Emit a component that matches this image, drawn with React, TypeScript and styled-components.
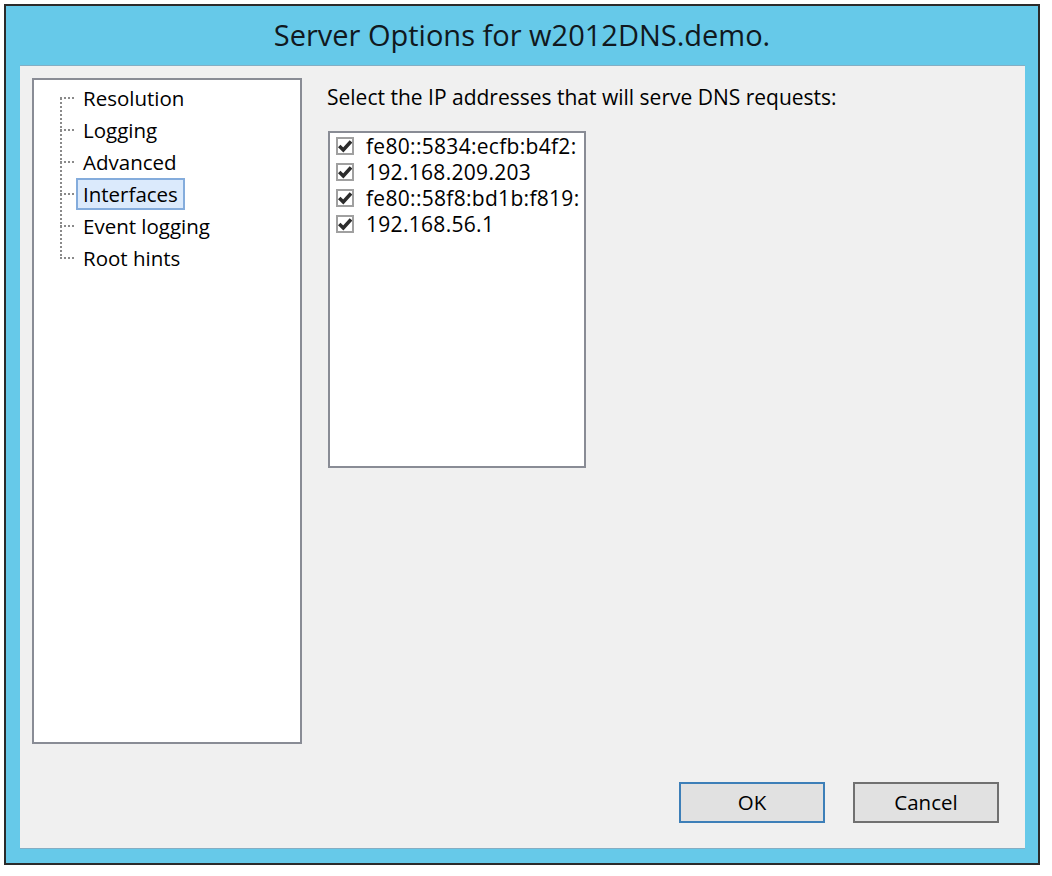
import React from 'react';
import styled, { createGlobalStyle } from 'styled-components';

const TREE_ITEMS = ['Resolution', 'Logging', 'Advanced', 'Interfaces', 'Event logging', 'Root hints'];
const SELECTED = 'Interfaces';

const ADDRESSES = ['fe80::5834:ecfb:b4f2:', '192.168.209.203', 'fe80::58f8:bd1b:f819:', '192.168.56.1'];

const FONT = `"Open Sans", "Noto Sans", sans-serif`;

const GlobalStyle = createGlobalStyle`
  html, body {
    margin: 0;
    padding: 0;
    background: #ffffff;
  }
  * {
    box-sizing: border-box;
  }
`;

export default function App() {
  return (
    <>
      <GlobalStyle />
      <Page>
        <Window>
          <TitleBar>Server Options for w2012DNS.demo.</TitleBar>
          <Client>
            <Body>
              <TreeBox>
                {TREE_ITEMS.map((item, idx) => (
                  <TreeRow key={item}>
                    <Connector $first={idx === 0} $last={idx === TREE_ITEMS.length - 1} />
                    <TreeLabel $selected={item === SELECTED}>{item}</TreeLabel>
                  </TreeRow>
                ))}
              </TreeBox>
              <Pane>
                <Caption>Select the IP addresses that will serve DNS requests:</Caption>
                <ListBox>
                  {ADDRESSES.map((addr) => (
                    <ListRow key={addr}>
                      <CheckBox>
                        <svg width="14" height="14" viewBox="0 0 14 14">
                          <path d="M1.2 7 L5.3 11 L13 2.4" fill="none" stroke="#2c2c2c" strokeWidth="3.6" />
                        </svg>
                      </CheckBox>
                      <Address>{addr}</Address>
                    </ListRow>
                  ))}
                </ListBox>
              </Pane>
            </Body>
            <Buttons>
              <Button $default>OK</Button>
              <Button>Cancel</Button>
            </Buttons>
          </Client>
        </Window>
      </Page>
    </>
  );
}

const Page = styled.div`
  padding: 4px 0 0 4px;
  width: 1052px;
  height: 876px;
`;

const Window = styled.div`
  width: 1036px;
  height: 861px;
  border: 2px solid #2b2b2b;
  background: #66c9e9;
  display: flex;
  flex-direction: column;
`;

const TitleBar = styled.div`
  height: 59px;
  display: flex;
  align-items: center;
  justify-content: center;
  padding-bottom: 3px;
  font-family: ${FONT};
  font-size: 29px;
  color: #101820;
`;

const Client = styled.div`
  margin: 0 13px 14px 14px;
  flex: 1;
  background: #f0f0f0;
  border-top: 1px solid #84aec4;
  border-bottom: 1px solid #84aec4;
  padding: 12px 26px 25px 12px;
  display: flex;
  flex-direction: column;
  font-family: ${FONT};
  font-size: 21px;
  color: #000;
`;

const Body = styled.div`
  flex: 1;
  display: flex;
  gap: 25px;
`;

const TreeBox = styled.div`
  width: 270px;
  height: 666px;
  background: #fff;
  border: 2px solid #898c95;
  padding: 2px 0 0 26px;
  font-size: 20.5px;
`;

const TreeRow = styled.div`
  height: 32px;
  display: flex;
  align-items: stretch;
`;

const dots = (dir: 'x' | 'y') =>
  dir === 'x'
    ? 'repeating-linear-gradient(90deg, #8a8a8a 0 2px, transparent 2px 4px)'
    : 'repeating-linear-gradient(180deg, #8a8a8a 0 2px, transparent 2px 4px)';

const Connector = styled.span<{ $first?: boolean; $last?: boolean }>`
  width: 16px;
  position: relative;
  flex: none;

  &::before {
    content: '';
    position: absolute;
    left: 0;
    width: 2px;
    top: ${(p) => (p.$first ? '16px' : '0')};
    bottom: ${(p) => (p.$last ? '15px' : '0')};
    background: ${dots('y')};
  }

  &::after {
    content: '';
    position: absolute;
    left: 0;
    right: 0;
    top: 15px;
    height: 2px;
    background: ${dots('x')};
  }
`;

const TreeLabel = styled.span<{ $selected?: boolean }>`
  display: flex;
  align-items: center;
  padding: 0 5px 1px;
  border: 2px solid ${(p) => (p.$selected ? '#84acdc' : 'transparent')};
  background: ${(p) => (p.$selected ? '#dbeafc' : 'transparent')};
  white-space: nowrap;
  line-height: 26px;
`;

const Pane = styled.div`
  display: flex;
  flex-direction: column;
  padding-top: 6px;
`;

const Caption = styled.div`
  height: 26px;
  line-height: 26px;
  white-space: nowrap;
`;

const ListBox = styled.div`
  margin-top: 21px;
  margin-left: 1px;
  width: 258px;
  height: 337px;
  background: #fff;
  border: 2px solid #898c95;
  overflow: hidden;
  padding-left: 6px;
`;

const ListRow = styled.div`
  height: 26px;
  display: flex;
  align-items: center;
  gap: 12px;
`;

const CheckBox = styled.span`
  width: 18px;
  height: 18px;
  flex: none;
  border: 2px solid #a0a0a0;
  background: #fff;
  display: flex;
  align-items: center;
  justify-content: center;
`;

const Address = styled.span`
  white-space: nowrap;
  letter-spacing: 0.3px;
  line-height: 26px;
`;

const Buttons = styled.div`
  display: flex;
  justify-content: flex-end;
  gap: 28px;
`;

const Button = styled.button<{ $default?: boolean }>`
  width: 146px;
  height: 41px;
  border: 2px solid ${(p) => (p.$default ? '#3d7fb8' : '#707070')};
  background: #e1e1e1;
  font-family: ${FONT};
  font-size: 20.5px;
  color: #000;
  padding: 0 0 2px;
`;
